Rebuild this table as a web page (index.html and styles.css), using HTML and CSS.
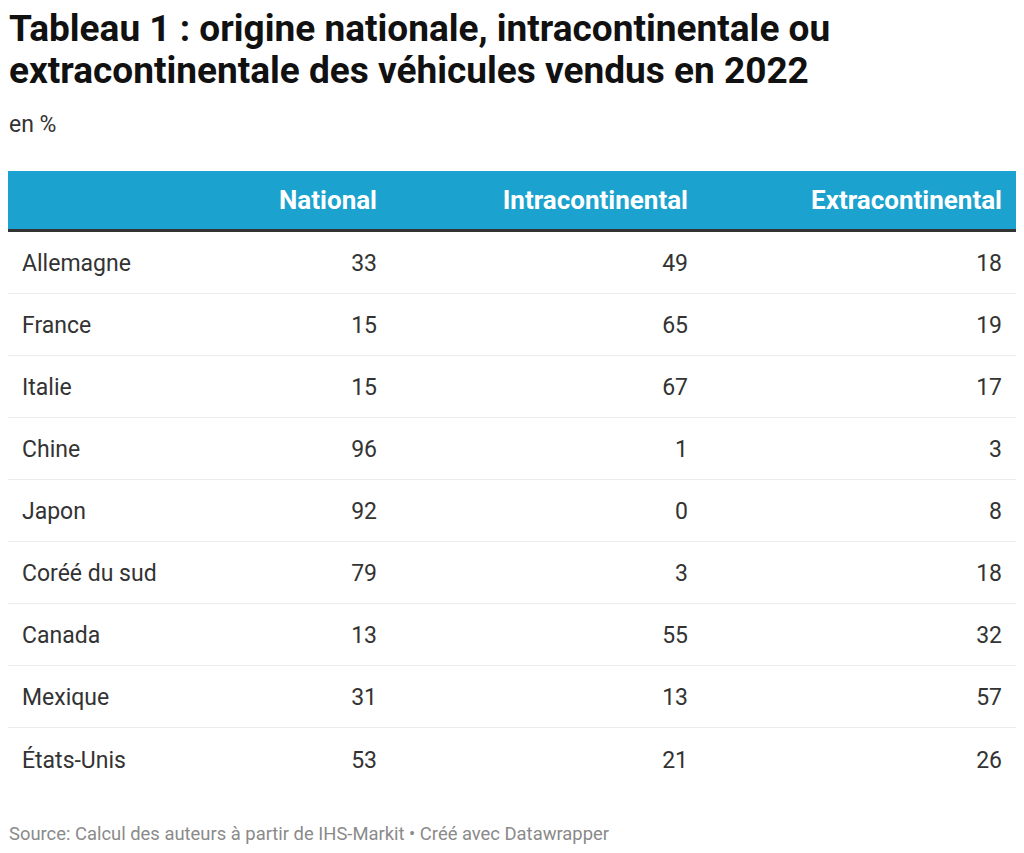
FILE: index.html
```html
<!DOCTYPE html>
<html lang="fr">
<head>
<meta charset="utf-8">
<link rel="stylesheet" href="styles.css">
</head>
<body>
<div class="chart">
  <h1 class="title">Tableau 1 : origine nationale, intracontinentale ou extracontinentale des véhicules vendus en 2022</h1>
  <p class="subtitle">en %</p>
  <div class="table">
    <div class="row head">
      <div class="cell"></div>
      <div class="cell num">National</div>
      <div class="cell num">Intracontinental</div>
      <div class="cell num">Extracontinental</div>
    </div>
    <div class="row"><div class="cell">Allemagne</div><div class="cell num">33</div><div class="cell num">49</div><div class="cell num">18</div></div>
    <div class="row"><div class="cell">France</div><div class="cell num">15</div><div class="cell num">65</div><div class="cell num">19</div></div>
    <div class="row"><div class="cell">Italie</div><div class="cell num">15</div><div class="cell num">67</div><div class="cell num">17</div></div>
    <div class="row"><div class="cell">Chine</div><div class="cell num">96</div><div class="cell num">1</div><div class="cell num">3</div></div>
    <div class="row"><div class="cell">Japon</div><div class="cell num">92</div><div class="cell num">0</div><div class="cell num">8</div></div>
    <div class="row"><div class="cell">Coréé du sud</div><div class="cell num">79</div><div class="cell num">3</div><div class="cell num">18</div></div>
    <div class="row"><div class="cell">Canada</div><div class="cell num">13</div><div class="cell num">55</div><div class="cell num">32</div></div>
    <div class="row"><div class="cell">Mexique</div><div class="cell num">31</div><div class="cell num">13</div><div class="cell num">57</div></div>
    <div class="row last"><div class="cell">États-Unis</div><div class="cell num">53</div><div class="cell num">21</div><div class="cell num">26</div></div>
  </div>
  <p class="source">Source: Calcul des auteurs à partir de IHS-Markit • Créé avec Datawrapper</p>
</div>
</body>
</html>
```
FILE: styles.css
```css
html, body {
  margin: 0;
  padding: 0;
  background: #ffffff;
}
body {
  font-family: Roboto, "Liberation Sans", sans-serif;
  color: #333333;
}
.chart {
  padding: 8px 8px 0 8px;
}
.title {
  margin: 0;
  font-size: 37px;
  line-height: 42px;
  font-weight: 700;
  color: #111111;
  padding-left: 1px;
  max-width: 900px;
}
.subtitle {
  margin: 19px 0 0 1px;
  font-size: 23px;
  line-height: 28px;
  color: #333333;
}
.table {
  margin-top: 32px;
}
.row {
  display: grid;
  grid-template-columns: 150px 233px 311px 314px;
  height: 62px;
  align-items: center;
  border-bottom: 1px solid #ececec;
  box-sizing: border-box;
  font-size: 23px;
  padding-top: 2px;
}
.row.head {
  height: 61px;
  padding-top: 0;
  background: #1ba2ce;
  border-bottom: 3px solid #333333;
  color: #ffffff;
  font-weight: 700;
  font-size: 26px;
}
.row.last {
  border-bottom: none;
}
.cell {
  padding: 0 14px;
  white-space: nowrap;
}
.cell.num {
  text-align: right;
}
.source {
  margin: 33px 0 0 1px;
  font-size: 18.4px;
  color: #8a8a8a;
}
```
